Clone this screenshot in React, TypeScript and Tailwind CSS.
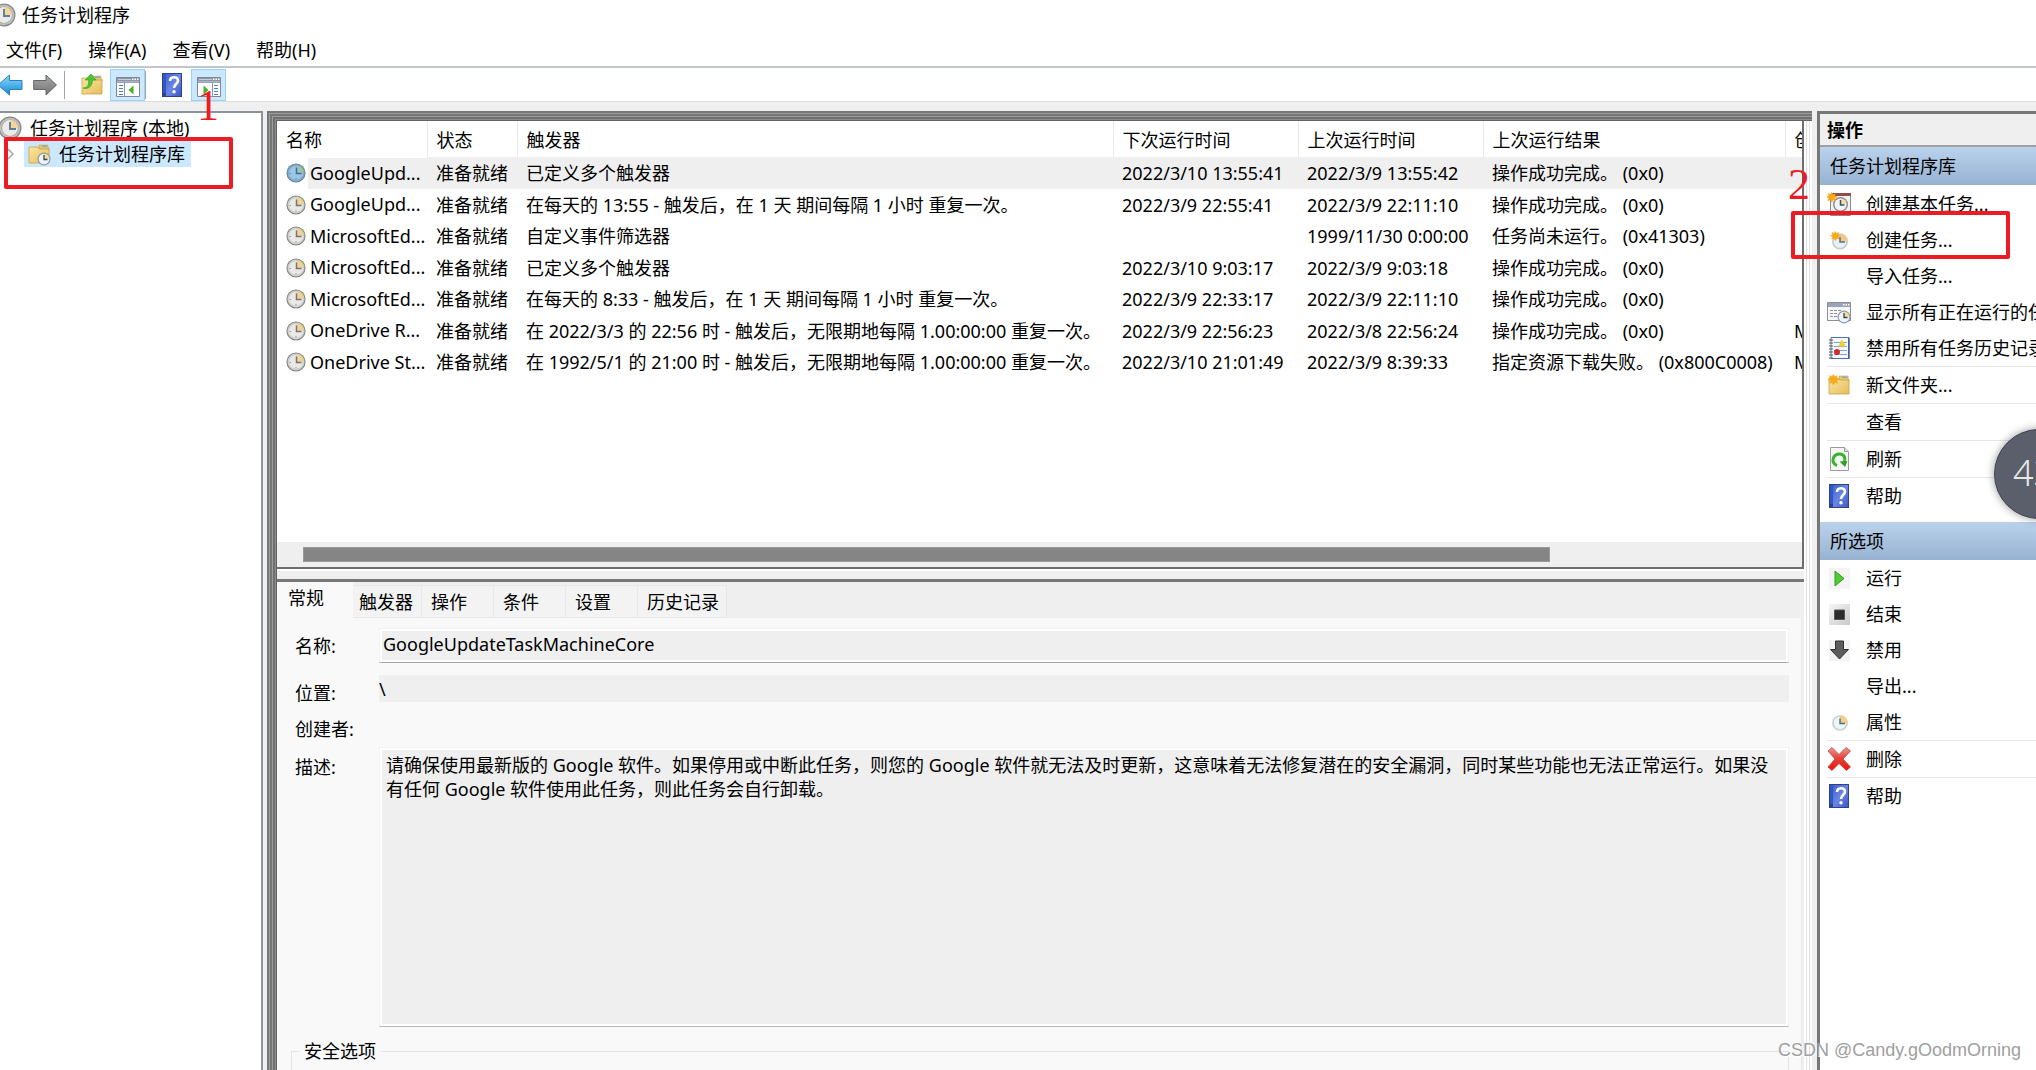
import type { ReactNode } from "react";

const TASKS = [
	["GoogleUpd...", "准备就绪", "已定义多个触发器", "2022/3/10 13:55:41", "2022/3/9 13:55:42", "操作成功完成。 (0x0)", ""],
	["GoogleUpd...", "准备就绪", "在每天的 13:55 - 触发后，在 1 天 期间每隔 1 小时 重复一次。", "2022/3/9 22:55:41", "2022/3/9 22:11:10", "操作成功完成。 (0x0)", ""],
	["MicrosoftEd...", "准备就绪", "自定义事件筛选器", "", "1999/11/30 0:00:00", "任务尚未运行。 (0x41303)", ""],
	["MicrosoftEd...", "准备就绪", "已定义多个触发器", "2022/3/10 9:03:17", "2022/3/9 9:03:18", "操作成功完成。 (0x0)", ""],
	["MicrosoftEd...", "准备就绪", "在每天的 8:33 - 触发后，在 1 天 期间每隔 1 小时 重复一次。", "2022/3/9 22:33:17", "2022/3/9 22:11:10", "操作成功完成。 (0x0)", ""],
	["OneDrive R...", "准备就绪", "在 2022/3/3 的 22:56 时 - 触发后，无限期地每隔 1.00:00:00 重复一次。", "2022/3/9 22:56:23", "2022/3/8 22:56:24", "操作成功完成。 (0x0)", "M"],
	["OneDrive St...", "准备就绪", "在 1992/5/1 的 21:00 时 - 触发后，无限期地每隔 1.00:00:00 重复一次。", "2022/3/10 21:01:49", "2022/3/9 8:39:33", "指定资源下载失败。 (0x800C0008)", "M"],
];

const COLUMNS = [
	{ title: "名称", width: "w-[150px]" },
	{ title: "状态", width: "w-[90px]" },
	{ title: "触发器", width: "" },
	{ title: "下次运行时间", width: "w-[185px]" },
	{ title: "上次运行时间", width: "w-[185px]" },
	{ title: "上次运行结果", width: "w-[302px]" },
	{ title: "创", width: "w-[17px]" },
];

const TABS = [
	{ title: "触发器", size: "w-[69px] pl-1.5" },
	{ title: "操作", size: "w-[72px] pl-[9px]" },
	{ title: "条件", size: "w-[72px] pl-[9px]" },
	{ title: "设置", size: "w-[72px] pl-[9px]" },
	{ title: "历史记录", size: "w-[89px] pl-[9px]" },
];

function ClockIcon({ className }: { className: string }) {
	return (
		<svg viewBox="0 0 24 24" className={className}>
			<circle cx="12" cy="12" r="11.500" fill="#8a8a88" />
			<circle cx="12" cy="12" r="10.200" fill="#c2c2c0" />
			<circle cx="12" cy="12" r="8.600" fill="#a4a4a2" />
			<circle cx="12" cy="12" r="7.900" fill="#ecebe8" />
			<path d="M12 12V4.100a7.900 7.900 0 0 1 7.900 7.900z" fill="#f5d698" />
			<path d="M12 6v7h6" fill="none" stroke="#5b7f9c" strokeWidth="1.900" />
		</svg>
	);
}

function TaskClock({ selected }: { selected: boolean }) {
	return (
		<svg viewBox="0 0 20 20" className="size-5 shrink-0">
			<circle cx="10" cy="10" r="9.600" fill={selected ? "#6688a0" : "#858583"} />
			<circle cx="10" cy="10" r="8.500" fill={selected ? "#86abc8" : "#cfcfcd"} />
			<circle cx="10" cy="10" r="6.800" fill={selected ? "#9cc6e6" : "#e9e9e7"} />
			<path d="M10 10V3a7 7 0 0 1 7 7z" fill={selected ? "#9cc4b8" : "#f7cfa0"} />
			<path d="M14 3.500a8 8 0 0 1 3 5" fill="none" stroke={selected ? "#8fc48c" : "#d9dc6a"} strokeWidth="1.600" />
			<path d="M10.500 4.500v6h5" fill="none" stroke={selected ? "#3f6f94" : "#757575"} strokeWidth="1.500" />
			<path d="M3.500 10.500H5M10 16.500V15" stroke={selected ? "#5f89a8" : "#9a9a9a"} />
		</svg>
	);
}

function Folder({ children }: { children?: ReactNode }) {
	return (
		<svg viewBox="0 0 24 24" className="size-6 shrink-0">
			<defs>
				<linearGradient id="folder" x1="0" y1="0" x2="1" y2="1">
					<stop offset="0" stopColor="#fbe7a4" />
					<stop offset="1" stopColor="#e6bd59" />
				</linearGradient>
			</defs>
			<path d="M12 5V3h9v3h1v3H12z" fill="#e9c56c" stroke="#c9a24a" strokeWidth=".6" />
			<path d="M15 3.600h5v1.400h-5z" fill="#6fb0e8" />
			<path d="M2 5h9l1.500 2H22v14H2z" fill="url(#folder)" stroke="#c9a24a" strokeWidth=".8" />
			{children}
		</svg>
	);
}

function SmallClock() {
	return (
		<g>
			<circle cx="17" cy="17" r="6.500" fill="#8c9aa6" />
			<circle cx="17" cy="17" r="5.300" fill="#eef3f6" />
			<path d="M17 17v-5.300a5.300 5.300 0 0 1 5.300 5.300z" fill="#f5dc9a" />
			<path d="M17 13v4.500h3.500" fill="none" stroke="#33485c" strokeWidth="1.300" />
		</g>
	);
}

function Star() {
	return (
		<path
			d="M6 .500l1.400 2.700 2.800-1.300-.9 2.900 3 1-2.800 1.400 1.200 2.900-2.900-1L6 12l-1.300-2.900-2.900 1 1-2.900L.2 6l2.700-1.300-1-2.800 2.900 1.100z"
			fill="#f7a81b"
			stroke="#f7a81b"
			strokeWidth=".8"
		/>
	);
}

function HelpIcon() {
	return (
		<svg viewBox="0 0 20 24" className="h-6 w-5 shrink-0">
			<defs>
				<linearGradient id="help" x1="0" y1="0" x2="1" y2="1">
					<stop offset="0" stopColor="#3f63cf" />
					<stop offset=".5" stopColor="#6b86e4" />
					<stop offset="1" stopColor="#3d57c4" />
				</linearGradient>
			</defs>
			<path d="M0 0h20v24H0z" fill="#2f4289" />
			<path d="M4 1h15v22H4z" fill="url(#help)" />
			<path d="M1 1h3v19H1z" fill="#2e57c8" />
			<path d="M8 8c0-5 8-5 8-.500 0 3.500-4 3.500-4 7.500" fill="none" stroke="#fff" strokeWidth="2.600" />
			<circle cx="12" cy="18.800" r="1.700" fill="#fff" />
		</svg>
	);
}

function PaneIcon({ flip }: { flip?: boolean }) {
	return (
		<svg viewBox="0 0 24 20" className="h-5 w-6">
			<path d="M.5.5h23v19H.5z" fill="#fff" stroke="#7d8797" />
			<path d="M1 1h22v5H1z" fill="#8d97a8" />
			<path d="M2 2h13v1H2zM1 4.500h22v.800H1z" fill="#c7cfdb" />
			<path d="M16 1.500h1.500V3H16zM18.500 1.500H20V3h-1.500zM21 1.500h1.500V3H21z" fill="#fff" />
			<g transform={flip ? "translate(24 0) scale(-1 1)" : undefined}>
				<path d="M8.500 5v15" stroke="#8d97a8" />
				<path d="M3 8.500h4M3 11.500h4M3 14.500h4M3 17.500h4" stroke="#4c7fc4" strokeWidth="1.200" />
				<path d="M17.500 8.500v9l-5-4.500z" fill="#45b32a" />
			</g>
		</svg>
	);
}

function Arrow({ back }: { back?: boolean }) {
	return (
		<svg viewBox="0 0 24 22" className="h-[22px] w-6 shrink-0">
			<defs>
				<linearGradient id="backFill" x1="0" y1="0" x2="0" y2="1">
					<stop offset="0" stopColor="#8ddcf8" />
					<stop offset="1" stopColor="#1586d6" />
				</linearGradient>
				<linearGradient id="forwardFill" x1="0" y1="0" x2="0" y2="1">
					<stop offset="0" stopColor="#a8a8a8" />
					<stop offset="1" stopColor="#757575" />
				</linearGradient>
			</defs>
			{back ? (
				<path d="M-2 11L9.500 1v5.500H22v9H9.500V21z" fill="url(#backFill)" stroke="#2a7fc0" />
			) : (
				<path d="M23.500 11L13 1v5.500H.7v9H13V21z" fill="url(#forwardFill)" stroke="#666" />
			)}
		</svg>
	);
}

const icons: Record<string, ReactNode> = {
	basic: (
		<svg viewBox="0 0 24 24" className="size-6">
			<path d="M3.500 2.500h20v21h-20z" fill="#f2f2f2" stroke="#8b8b8b" />
			<path d="M4 1h20v3H4z" fill="#8d4f48" />
			<circle cx="13.500" cy="12.500" r="7.500" fill="#8b8f92" />
			<circle cx="13.500" cy="12.500" r="6" fill="#f3f6f7" />
			<path d="M13.500 12.500v-6a6 6 0 0 1 6 6z" fill="#f6e0a4" />
			<path d="M13.500 8v5h4" fill="none" stroke="#2f5575" strokeWidth="1.500" />
			<g transform="translate(-.5 0) scale(.85)"><Star /></g>
		</svg>
	),
	create: (
		<svg viewBox="0 0 24 24" className="size-6">
			<circle cx="13" cy="13.500" r="8" fill="#c3cdd3" />
			<circle cx="13" cy="13.500" r="6.300" fill="#eaf1f4" />
			<path d="M13 13.500V5.500a8 8 0 0 1 8 8z" fill="#efc98a" />
			<path d="M13 9v5h5" fill="none" stroke="#56708a" strokeWidth="1.500" />
			<g transform="translate(3.500 3) scale(.8)"><Star /></g>
		</svg>
	),
	running: (
		<svg viewBox="0 0 24 24" className="size-6">
			<path d="M.5 2.500h23v18H.5z" fill="#f7f8fa" stroke="#8b8f9c" />
			<path d="M1 3h22v4H1z" fill="#9aa3b8" />
			<path d="M16 4h1.500v1.500H16zM18.500 4H20v1.500h-1.500zM21 4h1.500v1.500H21z" fill="#fff" />
			<path d="M3 10.500h11M3 13.500h8M3 16.500h7" stroke="#8f8f8f" strokeDasharray="3 1" />
			<SmallClock />
		</svg>
	),
	history: (
		<svg viewBox="0 0 24 24" className="size-6">
			<path d="M4 1.500h18v21H4z" fill="#f5f8fd" stroke="#5470a8" />
			<path d="M21 2h1.500v21H21z" fill="#3f5f9c" />
			<path d="M2 4h4M2 7h4M2 10h4M2 13h4M2 16h4M2 19h4M2 22h4" stroke="#555" />
			<path d="M7 6.500h13M7 10.500h13M7 14.500h13M7 18.500h13" stroke="#7aa3dc" />
			<path d="M15 3.500l4 7h-8z" fill="#f2cf2a" />
			<circle cx="10" cy="16" r="3" fill="#d22b2b" />
		</svg>
	),
	folder: (
		<Folder>
			<g transform="translate(1 1) scale(.9)"><Star /></g>
		</Folder>
	),
	refresh: (
		<svg viewBox="0 0 24 24" className="size-6">
			<path d="M3.500.5h14l4 4v19h-18z" fill="#f7f7f7" stroke="#9c9c9c" />
			<path d="M17.500.5v4h4" fill="#ddd" stroke="#9c9c9c" />
			<path d="M10 18.500c-7-3-4-11.500 2.500-11.500 5 0 6.500 4.500 4.500 8.500" fill="none" stroke="#35b52c" strokeWidth="3" />
			<path d="M12.500 14.500l8-.500-2.500 6z" fill="#2aa322" />
		</svg>
	),
	help: <HelpIcon />,
	run: (
		<svg viewBox="0 0 24 24" className="size-6">
			<path d="M2 2h21v21H2z" fill="#f4f4f4" />
			<path d="M8 5l9 7.500L8 20z" fill="#4fcb34" stroke="#349c24" />
		</svg>
	),
	end: (
		<svg viewBox="0 0 24 24" className="size-6">
			<defs>
				<linearGradient id="endFill" x1="0" y1="0" x2="1" y2="1">
					<stop offset="0" stopColor="#f6f6f6" />
					<stop offset="1" stopColor="#c9c9c9" />
				</linearGradient>
			</defs>
			<path d="M2 2h21v21H2z" fill="url(#endFill)" />
			<path d="M7.500 8h10v9.500h-10z" fill="#2b2b2b" stroke="#555" />
		</svg>
	),
	disable: (
		<svg viewBox="0 0 24 24" className="size-6">
			<path d="M2 2h21v21H2z" fill="#f4f4f4" />
			<path d="M8.500 3h8v8.500h5l-9 9.500-9-9.500h5z" fill="#5d5d5d" stroke="#333" />
		</svg>
	),
	props: (
		<svg viewBox="0 0 24 24" className="size-6">
			<circle cx="13" cy="13" r="7.800" fill="#c5d0d6" />
			<circle cx="13" cy="13" r="6.200" fill="#f0f6f8" />
			<path d="M13 13V5.200a7.800 7.800 0 0 1 7.800 7.800z" fill="#f2d08c" />
			<path d="M13 8.500v5h5" fill="none" stroke="#4d6f8c" strokeWidth="1.500" />
		</svg>
	),
	remove: (
		<svg viewBox="0 0 24 24" className="size-6">
			<defs>
				<linearGradient id="removeFill" x1="0" y1="0" x2="0" y2="1">
					<stop offset="0" stopColor="#f09a94" />
					<stop offset=".45" stopColor="#e2463e" />
					<stop offset="1" stopColor="#ee1208" />
				</linearGradient>
			</defs>
			<path
				d="M1 4l4-3.500 7 7 7-7L23.500 4 16 12l7.500 8-4 3.500-7.500-7-7 7L1 20l7-8z"
				fill="url(#removeFill)"
				stroke="#b8443e"
				strokeWidth=".8"
			/>
		</svg>
	),
};

function Action({ icon, label, line }: { icon?: string; label: string; line?: boolean }) {
	return (
		<li className={line ? "ml-[7px] border-t border-[#e6e6e6]" : "ml-[7px]"}>
			<button type="button" className="flex h-9 w-full items-center gap-[15px] whitespace-nowrap text-left">
				<span className="flex size-6 shrink-0 items-center justify-center">{icon && icons[icon]}</span>
				{label}
			</button>
		</li>
	);
}

function SectionTitle({ children }: { children: ReactNode }) {
	return (
		<h2 className="h-[38px] bg-linear-to-b from-[#bad2ec] to-[#97b2d1] pl-2.5 leading-[38px]">{children}</h2>
	);
}

function TaskList() {
	return (
		<div className="flex h-[446px] flex-col bg-white">
			<div className="flex-1 overflow-hidden">
				<table className="w-full table-fixed border-collapse whitespace-nowrap text-left">
					<thead>
						<tr className="h-9">
							{COLUMNS.map((column, i) => (
								<th
									key={column.title}
									className={`${column.width} overflow-hidden p-0 pt-0.5 pl-[9px] font-normal ${i < 6 ? "border-r border-[#e8e8e8]" : ""}`}
								>
									{column.title}
								</th>
							))}
						</tr>
					</thead>
					<tbody>
						{TASKS.map((task, row) => (
							<tr key={row} className="odd:h-8 even:h-[31px]">
								{task.map((cell, i) =>
									i === 0 ? (
										<td key={i} className="p-0 pl-[9px]">
											<div className="flex items-center">
												<TaskClock selected={row === 0} />
												<span className={`ml-0.5 flex-1 pl-0.5 leading-[31px] ${row === 0 ? "bg-[#efefef]" : ""}`}>{cell}</span>
											</div>
										</td>
									) : (
										<td key={i} className={`overflow-hidden p-0 pl-[9px] ${row === 0 ? "bg-[#efefef]" : ""}`}>
											{cell}
										</td>
									),
								)}
							</tr>
						))}
					</tbody>
				</table>
			</div>
			<div className="h-[25px] bg-[#efefef] pt-[5px] pr-[252px] pl-[26px]">
				<div className="h-[15px] border border-[#9a9a9a] bg-[#858585]" />
			</div>
		</div>
	);
}

function TaskDetails() {
	return (
		<div className="flex min-h-0 flex-1 flex-col bg-[#efefef]">
			<div role="tablist" className="flex h-9 shrink-0 items-end">
				<button type="button" role="tab" aria-selected="true" className="h-9 w-[76px] bg-[#f9f9f9] pb-1 pl-[11px] text-left leading-8">
					常规
				</button>
				{TABS.map((tab) => (
					<button
						key={tab.title}
						type="button"
						role="tab"
						aria-selected="false"
						className={`${tab.size} h-[33px] border border-l-0 border-[#e8e8e8] bg-[#f3f3f3] text-left whitespace-nowrap`}
					>
						{tab.title}
					</button>
				))}
			</div>
			<div className="mr-0.5 min-h-0 flex-1 overflow-hidden border-r border-[#e8e8e8] bg-[#f9f9f9] pr-3 pl-[18px]">
				<div className="flex pt-2.5">
					<label htmlFor="task-name" className="w-[84px] pt-1.5">名称:</label>
					<input
						id="task-name"
						readOnly
						defaultValue="GoogleUpdateTaskMachineCore"
						className="h-[35px] min-w-0 flex-1 border border-[#f1f1f1] border-b-[#a9a9a9] bg-[#efefef] pb-1 pl-[3px] shadow-[inset_0_0_0_2px_#fff] outline-none"
					/>
				</div>
				<div className="flex pt-3">
					<label htmlFor="task-location" className="w-[84px] pt-1.5">位置:</label>
					<input
						id="task-location"
						readOnly
						defaultValue="\"
						className="h-[27px] min-w-0 flex-1 bg-[#efefef] outline-none"
					/>
				</div>
				<div className="pt-3">创建者:</div>
				<div className="flex pt-1.5">
					<label htmlFor="task-description" className="w-[84px] pt-2">描述:</label>
					<textarea
						id="task-description"
						readOnly
						defaultValue="请确保使用最新版的 Google 软件。如果停用或中断此任务，则您的 Google 软件就无法及时更新，这意味着无法修复潜在的安全漏洞，同时某些功能也无法正常运行。如果没有任何 Google 软件使用此任务，则此任务会自行卸载。"
						className="h-[280px] min-w-0 flex-1 resize-none overflow-hidden border border-[#f1f1f1] border-b-[#b9b9b9] bg-[#efefef] px-1.5 pt-[5px] leading-6 shadow-[inset_0_0_0_2px_#fff] outline-none"
					/>
				</div>
				<fieldset className="mt-3 -ml-1 h-40 border border-[#e4e4e4] pl-2">
					<legend className="px-1">安全选项</legend>
				</fieldset>
			</div>
		</div>
	);
}

export default function App() {
	return (
		<div className="relative flex h-screen flex-col overflow-hidden bg-white font-['Noto_Sans','Noto_Sans_CJK_SC',sans-serif] text-lg leading-6 text-black">
			<header>
				<div className="flex h-[30px] items-center gap-1.5">
					<ClockIcon className="-ml-2 size-6" />
					<h1>任务计划程序</h1>
				</div>
				<nav className="flex h-9 items-center gap-[26px] pt-1 pl-1.5">
					<button type="button">文件(F)</button>
					<button type="button">操作(A)</button>
					<button type="button">查看(V)</button>
					<button type="button">帮助(H)</button>
				</nav>
				<div className="flex h-9 items-center border-t-2 border-b border-t-[#c3c7cb] border-b-[#dcdcdc]">
					<button type="button" aria-label="后退"><Arrow back /></button>
					<button type="button" aria-label="前进" className="ml-[9px]"><Arrow /></button>
					<div className="ml-[7px] h-7 w-px bg-[#a5a5a5]" />
					<button type="button" aria-label="上移" className="ml-[15px]">
						<Folder>
							<path d="M3 15c5 0 6-4 5.500-8H5l6-6 5 6h-3.500c0 6-4 10-9.500 8z" fill="#4fc534" stroke="#369a22" strokeWidth=".6" />
						</Folder>
					</button>
					<button type="button" aria-label="显示控制台树" className="ml-1.5 flex h-8 w-[35px] items-center justify-center border border-[#99d1ff] bg-[#cce8ff] pt-1">
						<PaneIcon />
					</button>
					<div className="h-7 w-px bg-[#a5a5a5]" />
					<button type="button" aria-label="帮助" className="ml-4"><HelpIcon /></button>
					<button type="button" aria-label="显示操作窗格" className="ml-[9px] flex h-8 w-[35px] items-center justify-center border border-[#99d1ff] bg-[#cce8ff] pt-1">
						<PaneIcon flip />
					</button>
				</div>
			</header>
			<main className="flex min-h-0 flex-1 bg-[#efefef] pt-[9px]">
				<aside className="w-[263px] shrink-0 border-t-2 border-r-2 border-[#8d939c] bg-white">
					<div className="flex h-7 items-center gap-2 pt-0.5">
						<ClockIcon className="-ml-0.5 size-6" />
						任务计划程序 (本地)
					</div>
					<div className="flex h-[26px] items-center">
						<svg viewBox="0 0 24 24" className="size-6">
							<path d="M8 7l5 5-5 5" fill="none" stroke="#a6a6a6" strokeWidth="1.500" />
						</svg>
						<div className="flex h-[26px] items-center gap-2 bg-[#cce8ff] pr-1.5 pl-[3px]">
							<Folder><SmallClock /></Folder>
							任务计划程序库
						</div>
					</div>
				</aside>
				<section className="ml-1 flex min-w-0 flex-1 bg-[#efefef] pt-2.5 pl-2.5 shadow-[inset_2px_2px_#777,inset_3px_3px_#9c9c9c,inset_5px_5px_#777,inset_6px_6px_#9c9c9c,inset_8px_8px_#707070,inset_9px_9px_#8c8c8c,inset_10px_10px_#636363]">
					<div className="flex min-w-0 flex-1 flex-col">
						<div className="border-r-2 border-b-2 border-[#6e6e6e]">
							<TaskList />
						</div>
						<div className="h-2.5 shrink-0 border-t-2 border-white bg-[#efefef]" />
						<div className="h-[3px] shrink-0 bg-[#777]" />
						<TaskDetails />
					</div>
					<div className="w-2 shrink-0 bg-[repeating-linear-gradient(90deg,#fff_0_2px,#e0e0e0_2px_3px)]" />
				</section>
				<aside className="relative ml-[5px] w-[219px] shrink-0 overflow-hidden border-t-3 border-l-3 border-[#777] bg-white">
					<div className="h-[33px] border-b-2 border-[#a0a0a0] bg-[#efefef] pl-[7px] leading-8 font-bold">操作</div>
					<SectionTitle>任务计划程序库</SectionTitle>
					<ul className="pt-px">
						<Action icon="basic" label="创建基本任务..." />
						<Action icon="create" label="创建任务..." />
						<Action label="导入任务..." />
						<Action icon="running" label="显示所有正在运行的任务" />
						<Action icon="history" label="禁用所有任务历史记录" />
						<Action icon="folder" label="新文件夹..." line />
						<Action label="查看" line />
						<Action icon="refresh" label="刷新" line />
						<Action icon="help" label="帮助" line />
					</ul>
					<div className="h-2" />
					<SectionTitle>所选项</SectionTitle>
					<ul>
						<Action icon="run" label="运行" />
						<Action icon="end" label="结束" />
						<Action icon="disable" label="禁用" />
						<Action label="导出..." />
						<Action icon="props" label="属性" />
						<Action icon="remove" label="删除" line />
						<Action icon="help" label="帮助" line />
					</ul>
					<div className="absolute top-[315px] -right-12 size-[90px] rounded-full border border-[#3f434e] bg-[#5b5f6c] pl-[18px] text-4xl leading-[86px] font-light text-[#e8e8e8] shadow-[0_0_8px_#0006]">
						43
					</div>
				</aside>
			</main>
			<div className="absolute top-[137px] left-1 h-[52px] w-[229px] rounded-xs border-4 border-[#ed1c24]" />
			<div className="absolute top-[84px] left-[197px] font-['Liberation_Serif',serif] text-[44px] leading-[44px] text-[#ed1c24]">1</div>
			<div className="absolute top-[211px] right-[26px] h-12 w-[219px] rounded-xs border-4 border-[#ed1c24]" />
			<div className="absolute top-[163px] right-[226px] font-['Liberation_Serif',serif] text-[44px] leading-[44px] text-[#ed1c24]">2</div>
			<div className="absolute right-[15px] bottom-2 font-['Liberation_Sans',sans-serif] text-[#a0a0a0] [text-shadow:1px_1px_0_#fff]">
				CSDN @Candy.gOodmOrning
			</div>
		</div>
	);
}
